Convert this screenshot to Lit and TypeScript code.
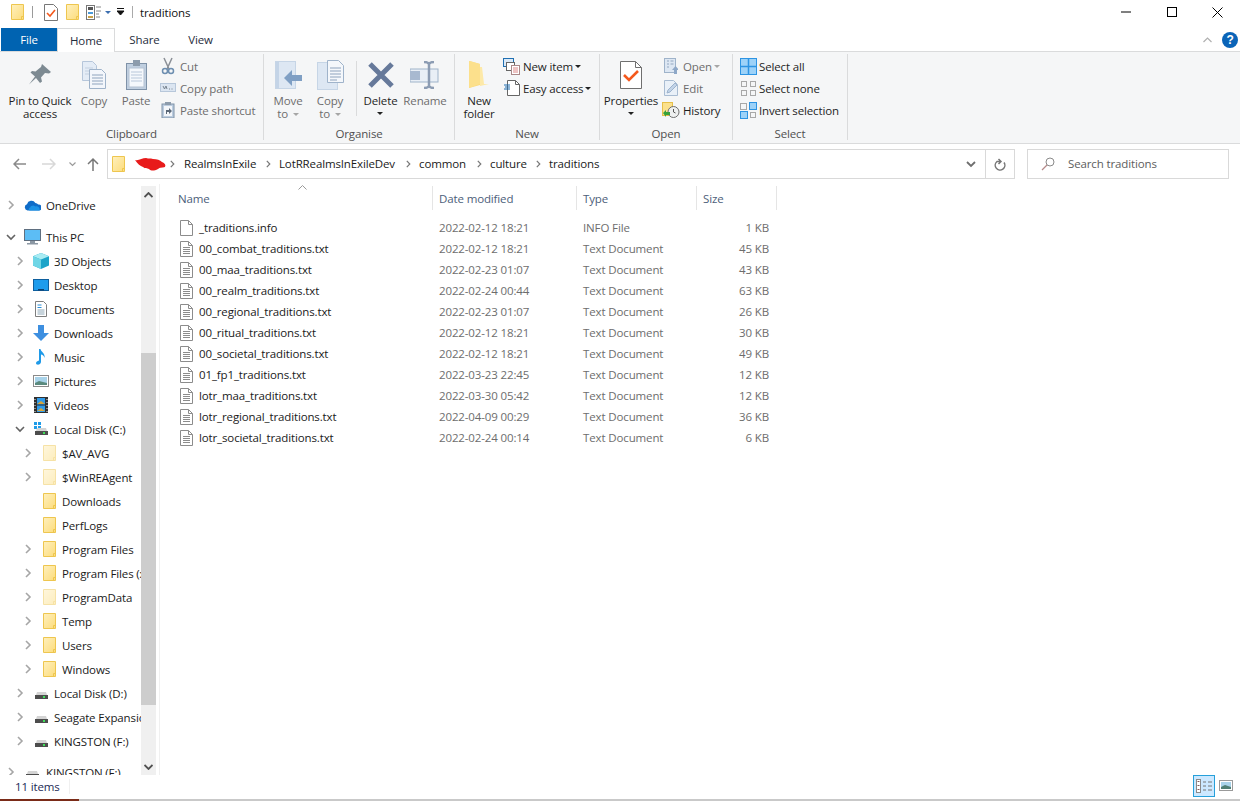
import { LitElement, html, css, svg } from "lit";
import { customElement } from "lit/decorators.js";

const folderSvg = (cls = "") => html`<svg class="${cls}" width="14" height="16" viewBox="0 0 14 16"><defs><linearGradient id="fg" x1="0" y1="0" x2="1" y2="1"><stop offset="0" stop-color="#fff0bd"/><stop offset="1" stop-color="#fcdc7c"/></linearGradient></defs><path d="M.5.5h12v15H.5z" fill="url(#fg)" stroke="#eec64f"/><path d="M10.5 15.5v-3h2" fill="none" stroke="#eec64f"/></svg>`;

const chevR = html`<svg width="7" height="10" viewBox="0 0 7 10"><path d="M1 1l4 4-4 4" fill="none" stroke="#a6a6a6" stroke-width="1.6"/></svg>`;
const chevD = html`<svg width="10" height="7" viewBox="0 0 10 7"><path d="M1 1l4 4 4-4" fill="none" stroke="#636363" stroke-width="1.6"/></svg>`;
const crumbChev = html`<svg width="5" height="8" viewBox="0 0 5 8"><path d="M.8.8l3 3.2-3 3.2" fill="none" stroke="#777" stroke-width="1.2"/></svg>`;

const wrap = (w: number, h: number, c: unknown) => html`<svg width="${w}" height="${h}" viewBox="0 0 ${w} ${h}">${c}</svg>`;

const hdd = (win = false) => wrap(16, 16, svg`
  ${win ? svg`<g fill="#1e9be8"><rect x="1" y="1" width="3" height="3"/><rect x="5" y="1" width="3" height="3"/><rect x="1" y="5" width="3" height="3"/><rect x="5" y="5" width="3" height="3"/></g>` : ""}
  <path d="M3 10l1-3h9l1 3z" fill="#d4d4d4"/><rect x="2" y="10" width="13" height="4" fill="#4d4d4d"/><rect x="10" y="11" width="2" height="2" fill="#3fe05a"/>`);

const navIcons: Record<string, unknown> = {
  onedrive: wrap(17, 12, svg`<path d="M3.5 11.5A3.2 3.2 0 0 1 3 5.3 4.6 4.6 0 0 1 11.4 4a3.7 3.7 0 0 1 2.8 1.5 3 3 0 0 1 .8 6z" fill="#0f6cc8"/><path d="M6 11.5c-1.6 0-1.8-2.4.2-3 .6-2 3.6-2.6 5-1 2-.6 5 .6 4.4 4z" fill="#1c93e6"/>`),
  pc: wrap(17, 16, svg`<rect x=".5" y=".5" width="16" height="11" fill="#5cbdf5" stroke="#5f6f80"/><path d="M6 12h5v2H6zM3 14h11v1.5H3z" fill="#8c98a4"/>`),
  cube: wrap(16, 16, svg`<path d="M8 0l8 3.2v9.4L8 16 0 12.6V3.2z" fill="#1ba4c9"/><path d="M8 0l8 3.2L8 6.6 0 3.2z" fill="#a9ecf3"/><path d="M0 3.2l8 3.4V16L0 12.6z" fill="#6fd6e6"/>`),
  desktop: wrap(16, 12, svg`<rect x=".5" y=".5" width="15" height="11" fill="#1e9cec" stroke="#0e5f9e"/><rect x="5" y="10" width="6" height="1.5" fill="#0e3f6e"/>`),
  docs: wrap(12, 16, svg`<path d="M.5.5h8l3 3v12H.5z" fill="#fff" stroke="#7e7e7e"/><path d="M2.5 4h4M2.5 6.5h4" stroke="#2a8fd8"/><path d="M2.5 9h7M2.5 11h7M2.5 13h7" stroke="#8fa8b8"/>`),
  dl: wrap(16, 16, svg`<path d="M5 0h6v8h5l-8 8-8-8h5z" fill="#3d8fe0"/>`),
  music: wrap(12, 16, svg`<path d="M4 0h1.5c.3 3 5 4 4 9-.5-2-2-3.400-3.500-3.500V13c0 2-2.500 3-4 2.500S.5 12.500 4 11.500z" fill="#1f9ae8"/>`),
  pics: wrap(16, 12, svg`<rect x=".5" y=".5" width="15" height="11" fill="#fff" stroke="#8a8a8a"/><rect x="2" y="2" width="12" height="8" fill="#a9d3ea"/><path d="M2 8l4-2 8 2v2H2z" fill="#5a8a7e"/>`),
  video: wrap(14, 16, svg`<rect width="14" height="16" fill="#2f2f2f"/><rect x="3" y="1" width="8" height="6.500" fill="#2f9ae8"/><rect x="3" y="8.500" width="8" height="6.500" fill="#2f9ae8"/><path d="M3 7l4-3 4 3zM3 14l4-3 4 3z" fill="#d7a43a"/><path d="M1 2v1M1 5v1M1 8v1M1 11v1M1 14v1M13 2v1M13 5v1M13 8v1M13 11v1M13 14v1" stroke="#eee"/>`),
  hddc: hdd(true),
  hdd: hdd(false),
};

interface NavRow { label: string; icon: string; level: number; arrow: "r" | "d" | ""; faded?: boolean; gap?: boolean; tight?: boolean }
const nav: NavRow[] = [
  { label: "OneDrive", icon: "onedrive", level: 0, arrow: "r" },
  { label: "This PC", icon: "pc", level: 0, arrow: "d", gap: true },
  { label: "3D Objects", icon: "cube", level: 1, arrow: "r" },
  { label: "Desktop", icon: "desktop", level: 1, arrow: "r" },
  { label: "Documents", icon: "docs", level: 1, arrow: "r" },
  { label: "Downloads", icon: "dl", level: 1, arrow: "r" },
  { label: "Music", icon: "music", level: 1, arrow: "r" },
  { label: "Pictures", icon: "pics", level: 1, arrow: "r" },
  { label: "Videos", icon: "video", level: 1, arrow: "r" },
  { label: "Local Disk (C:)", icon: "hddc", level: 1, arrow: "d" },
  { label: "$AV_AVG", icon: "folder", level: 2, arrow: "r", faded: true },
  { label: "$WinREAgent", icon: "folder", level: 2, arrow: "r", faded: true },
  { label: "Downloads", icon: "folder", level: 2, arrow: "" },
  { label: "PerfLogs", icon: "folder", level: 2, arrow: "" },
  { label: "Program Files", icon: "folder", level: 2, arrow: "r" },
  { label: "Program Files (x86)", icon: "folder", level: 2, arrow: "r" },
  { label: "ProgramData", icon: "folder", level: 2, arrow: "r", faded: true },
  { label: "Temp", icon: "folder", level: 2, arrow: "r" },
  { label: "Users", icon: "folder", level: 2, arrow: "r" },
  { label: "Windows", icon: "folder", level: 2, arrow: "r" },
  { label: "Local Disk (D:)", icon: "hdd", level: 1, arrow: "r" },
  { label: "Seagate Expansion Drive", icon: "hdd", level: 1, arrow: "r" },
  { label: "KINGSTON (F:)", icon: "hdd", level: 1, arrow: "r" },
  { label: "KINGSTON (F:)", icon: "hdd", level: 0, arrow: "r", tight: true },
];

const files = [
  ["_traditions.info", "2022-02-12 18:21", "INFO File", "1 KB"],
  ["00_combat_traditions.txt", "2022-02-12 18:21", "Text Document", "45 KB"],
  ["00_maa_traditions.txt", "2022-02-23 01:07", "Text Document", "43 KB"],
  ["00_realm_traditions.txt", "2022-02-24 00:44", "Text Document", "63 KB"],
  ["00_regional_traditions.txt", "2022-02-23 01:07", "Text Document", "26 KB"],
  ["00_ritual_traditions.txt", "2022-02-12 18:21", "Text Document", "30 KB"],
  ["00_societal_traditions.txt", "2022-02-12 18:21", "Text Document", "49 KB"],
  ["01_fp1_traditions.txt", "2022-03-23 22:45", "Text Document", "12 KB"],
  ["lotr_maa_traditions.txt", "2022-03-30 05:42", "Text Document", "12 KB"],
  ["lotr_regional_traditions.txt", "2022-04-09 00:29", "Text Document", "36 KB"],
  ["lotr_societal_traditions.txt", "2022-02-24 00:14", "Text Document", "6 KB"],
];

const fileIcon = (lines: boolean) => wrap(13, 16, svg`<path d="M.5.5h8l4 4v11H.5z" fill="#fff" stroke="#8c8c8c"/><path d="M8.500.5v4h4" fill="none" stroke="#8c8c8c"/>${lines ? svg`<path d="M3 6.500h7M3 8.500h7M3 10.500h7M3 12.500h7" stroke="#8c8c8c"/>` : ""}`);

const lg: Record<string, unknown> = {
  pin: wrap(22, 22, svg`<path d="M13 0l9 8-2 1.500-4-.5-4 4.500 1 4-2 1.500-4-5-7 6.500 6-8-4.500-4L3 7l3.500.5L12 3z" fill="#7d8a92"/>`),
  copy: wrap(25, 28, svg`<path d="M.5.5h10l4 4v15H.5z" fill="#e4ecf6" stroke="#b6c6da"/><path d="M3 7h8M3 10h8M3 13h8" stroke="#c3d0e0"/><path d="M7.500 8.500h12l4 4v15h-16z" fill="#f3f6fb" stroke="#9fb3ca"/><path d="M10 14h11M10 17h11M10 20h11M10 23h11" stroke="#8ea3bd"/>`),
  paste: wrap(21, 30, svg`<rect x=".5" y="3.500" width="20" height="26" fill="#c0cfe0" stroke="#7f92a8"/><rect x="3" y="8" width="15" height="19" fill="#f5f8fc" stroke="#b5c3d3"/><path d="M5 12h11M5 15h11M5 18h11M5 21h11" stroke="#b8c7da"/><rect x="7" y="0" width="7" height="6" fill="#8d9cac"/>`),
  move: wrap(27, 28, svg`<rect x=".5" y=".5" width="20" height="27" fill="#dde7f3" stroke="#c6d5e6"/><rect x="1" y="1" width="3" height="26" fill="#c4d4e7"/><path d="M9 17l8-8v5h10v6H17v5z" fill="#7f9fc4"/>`),
  copyto: wrap(27, 30, svg`<rect x=".5" y="2.500" width="20" height="27" fill="#dde7f3" stroke="#c6d5e6"/><path d="M10.500.5h11l5 5v17h-16z" fill="#f4f7fb" stroke="#9fb3ca"/><path d="M13 8h11M13 11h11M13 14h11M13 17h11M13 20h7" stroke="#8ea3bd"/>`),
  del: wrap(26, 26, svg`<path d="M2 2l22 22M24 2L2 24" stroke="#66799a" stroke-width="5"/>`),
  rename: wrap(30, 28, svg`<rect x="0" y="8" width="28" height="13" fill="#e9eff6" stroke="#9fb3ca"/><rect x="0" y="10" width="10" height="9" fill="#a8b9d0"/><path d="M14 1c2 0 4 0 5 2 1-2 3-2 5-2M19 3v22M14 27c2 0 4 0 5-2 1 2 3 2 5 2" fill="none" stroke="#8c9cb3" stroke-width="2.500"/>`),
  newf: wrap(20, 28, svg`<path d="M0 0l11 3v21L0 27z" fill="#fbd97a"/><path d="M11 6h2l2 17h5l-9 2z" fill="#fde9a8"/><path d="M0 0h1l10 3v20l-11 4z" fill="#fce08c"/>`),
  props: wrap(22, 28, svg`<path d="M.5.5h15l6 6v21H.5z" fill="#fff" stroke="#6f6f6f"/><path d="M15.500.5v6h6" fill="none" stroke="#6f6f6f"/><path d="M4 14l5 5 9-9" fill="none" stroke="#f4591d" stroke-width="2.600"/>`),
};

const sm: Record<string, unknown> = {
  cut: wrap(16, 18, svg`<path d="M4 1l5 11M12 1L7 12" stroke="#8a8f96" stroke-width="1.500"/><circle cx="5" cy="14" r="2.500" fill="none" stroke="#6d8eb0" stroke-width="1.500"/><circle cx="11" cy="14" r="2.500" fill="none" stroke="#6d8eb0" stroke-width="1.500"/>`),
  path: wrap(16, 10, svg`<rect x=".5" y=".5" width="15" height="8" fill="#dbe5f1" stroke="#b7c7da"/><path d="M3 3l1.500 3 1.500-3 1 3M9 6h1M11.500 6h1" stroke="#77838f" fill="none"/>`),
  shortcut: wrap(14, 16, svg`<rect x="1" y="2" width="12" height="14" fill="#bccde0" stroke="#7f92a8"/><rect x="3" y="4" width="8" height="10" fill="#f3f6fa"/><path d="M5 12V8h3V6l3 3-3 3v-2H6v2z" fill="#5a6878"/><rect x="4" y="0" width="6" height="3" fill="#8d9cac"/>`),
  newitem: wrap(17, 17, svg`<rect x=".5" y=".5" width="10" height="8" fill="#dbe9f7" stroke="#1f6fb2"/><rect x="3.500" y="4.500" width="8" height="8" fill="#fff" stroke="#666"/><rect x="8.500" y="7.500" width="8" height="9" fill="#fff" stroke="#a88"/><path d="M10 10h5M10 12h5M10 14h5" stroke="#d88"/>`),
  easy: wrap(16, 16, svg`<path d="M3.500.5h8l4 4v11h-12z" fill="#fff" stroke="#666"/><path d="M11.500.5v4h4" fill="none" stroke="#666"/><path d="M0 5h6M1 7h5M0 9h6" stroke="#1f6fb2"/>`),
  open: wrap(14, 16, svg`<rect x=".5" y=".5" width="11" height="14" fill="#dde7f3" stroke="#9fb3ca"/><path d="M3 3h2M6.500 3h3M3 6h2M6.500 6h3M3 9h2" stroke="#93a7c0"/><path d="M10 16v-4H8l3.500-4L15 12h-2v4z" fill="#8ea8c8"/>`),
  edit: wrap(14, 16, svg`<path d="M.5.5h9l4 4v11H.5z" fill="#e9f0f8" stroke="#a9bcd2"/><path d="M3 13l1-3 7-7 2 2-7 7z" fill="#c3d4e8" stroke="#9db3cd"/>`),
  history: wrap(18, 16, svg`<rect x=".5" y=".5" width="10" height="13" fill="#fbe08c" stroke="#e6bf49"/><circle cx="11.500" cy="10" r="5.500" fill="#eef0f0" stroke="#6e6e6e"/><path d="M11.500 7v3l2 1" stroke="#555" fill="none"/><path d="M1 11l3-3v2h4v3H4v2z" fill="#37a23a"/>`),
  all: wrap(17, 17, svg`<rect x=".5" y=".5" width="16" height="16" fill="#9dd2f8" stroke="#2d94e3"/><path d="M8.500 0v17M0 8.500h17" stroke="#2d94e3" stroke-width="1.500"/>`),
  none: wrap(15, 15, svg`<g fill="none" stroke="#a8a8a8"><rect x=".5" y=".5" width="5" height="5"/><rect x="9.500" y=".5" width="5" height="5"/><rect x=".5" y="9.500" width="5" height="5"/><rect x="9.500" y="9.500" width="5" height="5"/></g>`),
  invert: wrap(17, 17, svg`<rect x=".5" y="1.500" width="6" height="6" fill="none" stroke="#a8a8a8"/><rect x="9.500" y=".5" width="7" height="7" fill="#9dd2f8" stroke="#2d94e3"/><rect x=".5" y="9.500" width="7" height="7" fill="#9dd2f8" stroke="#2d94e3"/><rect x="10.500" y="10.500" width="5" height="5" fill="none" stroke="#a8a8a8"/>`),
};

const caret = (dis = false) => html`<span class="caret ${dis ? "dis" : ""}"></span>`;

const crumbs: [string, number][] = [
  ["RealmsInExile", 95],
  ["LotRRealmsInExileDev", 140],
  ["common", 71],
  ["culture", 59],
  ["traditions", 70],
];

@customElement("app-root")
export class AppRoot extends LitElement {
  static styles = css`
    :host { display: block; width: 1240px; height: 801px; overflow: hidden; background: #fff; font: 11.5px "Open Sans", "Noto Sans", sans-serif; letter-spacing: -.13px; color: #1a1a1a; }
    svg { display: block; flex: none; }
    .window { display: flex; flex-direction: column; height: 801px; }

    .titlebar { height: 28px; display: flex; align-items: center; flex: none; padding-bottom: 4px; box-sizing: border-box; }
    .qat { display: flex; align-items: center; padding-left: 11px; }
    .qat .sep { width: 1px; height: 12px; background: #9a9a9a; }
    .title { color: #111; }
    .winctl { margin-left: auto; display: flex; align-items: center; }
    .winbtn { width: 46px; display: flex; justify-content: center; }

    .tabs { height: 24px; display: flex; flex: none; position: relative; padding-left: 1px; border-bottom: 1px solid #dadbdc; box-sizing: border-box; }
    .tab { display: flex; align-items: center; justify-content: center; color: #1f2d3d; box-sizing: border-box; height: 24px; padding-bottom: 1px; }
    .tab.file { width: 56px; background: #0063b1; color: #fff; height: 23px; }
    .tab.home { width: 58px; background: #fff; border: 1px solid #dadbdc; border-bottom: none; }
    .tab.share { width: 59px; }
    .tab.view { width: 53px; }
    .tabs .right { margin-left: auto; display: flex; align-items: center; gap: 10px; padding-right: 2px; }
    .help { width: 16px; height: 16px; border-radius: 50%; background: #0a64b8; color: #fff; font: bold 12px "Liberation Sans", sans-serif; display: flex; align-items: center; justify-content: center; }

    .ribbon { height: 92px; flex: none; background: #f5f6f7; border-bottom: 1px solid #dadbdc; box-sizing: border-box; display: flex; padding-top: 2px; }
    .group { border-right: 1px solid #dadbdc; height: 86px; display: flex; flex-direction: column; box-sizing: border-box; }
    .g-body { flex: 1; display: flex; min-height: 0; }
    .g-label { height: 12px; line-height: 12px; text-align: center; color: #505050; }
    .big { display: flex; flex-direction: column; align-items: center; flex: none; color: #1e1e1e; line-height: 13px; text-align: center; }
    .big .ic { height: 36px; display: flex; align-items: center; justify-content: center; margin-top: 3px; }
    .big .tx { margin-top: 1px; white-space: nowrap; }
    .dis { color: #6d6d6d; }
    .caret { display: inline-block; width: 0; height: 0; border: 3px solid transparent; border-top: 3px solid #222; border-bottom: none; vertical-align: 2px; margin-left: 2px; }
    .caret.dis { border-top-color: #a6a6a6; }
    .caret.block { display: block; margin: 5px auto 0; }
    .smcol { display: flex; flex-direction: column; padding-top: 1px; flex: none; }
    .small { height: 22px; display: flex; align-items: center; white-space: nowrap; color: #1e1e1e; }
    .small.dis { color: #6d6d6d; }
    .small .si { display: flex; align-items: center; justify-content: center; flex: none; }
    .vsep { width: 1px; height: 55px; background: #dadbdc; margin: 7px 0 0 5px; flex: none; }

    .addr { height: 40px; flex: none; display: flex; align-items: center; position: relative; }
    .nav-btns { width: 107px; display: flex; align-items: center; flex: none; }
    .addrbox { width: 908px; height: 30px; border: 1px solid #d9d9d9; box-sizing: border-box; display: flex; align-items: center; flex: none; }
    .crumbs { display: flex; align-items: center; flex: 1; padding-left: 4px; }
    .crumb { display: flex; align-items: center; flex: none; color: #1a1a1a; }
    .crumb .cv { margin-right: 8px; }
    .crumb .t, .search .t { padding-bottom: 2px; }
    .crumb .t { flex: 1; }
    .addr-dd { width: 29px; display: flex; justify-content: center; flex: none; }
    .addr-rf { width: 29px; height: 28px; border-left: 1px solid #d9d9d9; display: flex; align-items: center; justify-content: center; box-sizing: border-box; flex: none; }
    .search { width: 202px; height: 30px; margin: 0 0 0 12px; border: 1px solid #d9d9d9; box-sizing: border-box; display: flex; align-items: center; padding-left: 13px; gap: 13px; color: #5d5d5d; flex: none; }

    .main { flex: 1; display: flex; min-height: 0; }
    .tree { width: 141px; flex: none; overflow: hidden; padding-top: 9px; box-sizing: border-box; }
    .row { height: 24px; display: flex; align-items: center; white-space: nowrap; }
    .row.gap { margin-top: 8px; }
    .row.tight { margin-top: 7px; }
    .row .ar { width: 16px; display: flex; justify-content: center; flex: none; margin-left: 3px; }
    .row .ni { width: 24px; display: flex; justify-content: center; flex: none; margin-left: 1px; margin-right: 2px; }
    .row .lb { color: #1a1a1a; }
    .l1 { padding-left: 9px; } .l2 { padding-left: 17px; }
    .l1 .ni { margin-right: 1px; }
    .l2 .ni { width: 22px; margin-left: 3px; margin-right: 1px; }
    .faded .ni svg { opacity: .5; }

    .sbar { width: 15px; flex: none; background: #f0f0f0; display: flex; flex-direction: column; margin-top: 2px; }
    .sb-b { height: 17px; flex: none; display: flex; align-items: center; justify-content: center; }
    .thumb { height: 352px; background: #cdcdcd; margin-top: 150px; margin-bottom: auto; flex: none; }
    .split { width: 1px; background: #f0f0f0; margin-left: 3px; flex: none; }

    .list { flex: 1; position: relative; padding-left: 12px; }
    .head { display: grid; grid-template-columns: 261px 144px 120px 80px; height: 24px; margin-top: 2px; }
    .head div { color: #4c607a; padding-left: 6px; display: flex; align-items: center; border-right: 1px solid #e5e5e5; box-sizing: border-box; }
    .sort { position: absolute; left: 138px; top: 1px; }
    .files { margin-top: 7px; }
    .frow { display: grid; grid-template-columns: 261px 144px 120px 80px; height: 21px; align-items: center; }
    .fname { display: flex; align-items: center; padding-left: 8px; gap: 6px; white-space: nowrap; color: #1a1a1a; }
    .fcell { padding-left: 6px; color: #6d6d6d; }
    .fsize { color: #6d6d6d; text-align: right; padding-right: 8px; }

    .status { height: 24px; flex: none; display: flex; align-items: center; position: relative; padding-bottom: 2px; box-sizing: border-box; }
    .count { margin-left: 15px; width: 54px; color: #1c2a55; border-right: 1px solid #f0f0f0; }
    .views { margin-left: auto; display: flex; align-items: center; padding: 0 7px 1px 0; gap: 4px; }
    .view-on { width: 22px; height: 22px; background: #cce8ff; border: 1px solid #26a0da; box-sizing: border-box; display: flex; align-items: center; justify-content: center; }
    .strip { height: 2px; flex: none; background: #c9c9c9; display: flex; }
    .strip div { width: 79px; background: #7a2b18; }
  `;

  big(icon: unknown, label: unknown, width: number, dis: boolean) {
    return html`<div class="big ${dis ? "dis" : ""}" style="width:${width}px"><div class="ic">${icon}</div><div class="tx">${label}</div></div>`;
  }
  small(icon: unknown, label: unknown, iw: number, gap: number, dis = false) {
    return html`<div class="small ${dis ? "dis" : ""}"><span class="si" style="width:${iw}px;margin-right:${gap}px">${icon}</span>${label}</div>`;
  }

  render() {
    return html`<div class="window">
      <div class="titlebar">
        <div class="qat">
          ${folderSvg()}
          <span class="sep" style="margin:0 11px 0 7px"></span>
          ${wrap(14, 17, svg`<path d="M.5.5h9l4 4v12H.5z" fill="#fff" stroke="#777"/><path d="M3 9l3 3 5-6" fill="none" stroke="#f4591d" stroke-width="1.600"/>`)}
          <span style="width:8px"></span>
          ${folderSvg()}
          <span style="width:6px"></span>
          ${wrap(16, 15, svg`<rect x=".5" y=".5" width="8" height="14" fill="#fff" stroke="#777"/><rect x="2" y="2" width="5" height="3" fill="#555"/><rect x="2" y="7" width="5" height="2" fill="#4a9ad8"/><rect x="2" y="11" width="5" height="2" fill="#c9a24a"/><path d="M10 2h5M10 6h5M10 9h3M10 12h4" stroke="#888"/>`)}
          <span class="caret" style="border-top-color:#3c6fb0;margin-left:3px"></span>
          <span style="width:6px"></span>
          ${wrap(8, 8, svg`<path d="M0 .5h7M0 3h7l-3.500 4z" stroke="#111" fill="#111" stroke-width="1"/>`)}
          <span class="sep" style="margin:0 7px 0 7px;background:#aaa"></span>
          <span class="title">traditions</span>
        </div>
        <div class="winctl">
          <div class="winbtn">${wrap(10, 2, svg`<path d="M0 1h10" stroke="#000"/>`)}</div>
          <div class="winbtn">${wrap(10, 10, svg`<rect x=".5" y=".5" width="9" height="9" fill="none" stroke="#000"/>`)}</div>
          <div class="winbtn" style="width:44px;padding-right:1px">${wrap(11, 11, svg`<path d="M.5.5l10 10M10.500.5l-10 10" stroke="#000"/>`)}</div>
        </div>
      </div>

      <div class="tabs">
        <div class="tab file">File</div>
        <div class="tab home">Home</div>
        <div class="tab share">Share</div>
        <div class="tab view">View</div>
        <div class="right">
          ${wrap(9, 6, svg`<path d="M.5 5L4.500 1l4 4" fill="none" stroke="#b0b0b0" stroke-width="1.200"/>`)}
          <div class="help">?</div>
        </div>
      </div>

      <div class="ribbon">
        <div class="group" style="width:264px">
          <div class="g-body">
            <div style="width:4px"></div>
            ${this.big(lg.pin, html`Pin to Quick<br />access`, 72, false)}
            ${this.big(lg.copy, "Copy", 36, true)}
            ${this.big(lg.paste, "Paste", 48, true)}
            <div class="smcol">
              ${this.small(sm.cut, "Cut", 16, 4, true)}
              ${this.small(sm.path, "Copy path", 16, 4, true)}
              ${this.small(sm.shortcut, "Paste shortcut", 16, 4, true)}
            </div>
          </div>
          <div class="g-label">Clipboard</div>
        </div>
        <div class="group" style="width:191px">
          <div class="g-body">
            <div style="width:3px"></div>
            ${this.big(lg.move, html`Move<br />to ${caret(true)}`, 42, true)}
            ${this.big(lg.copyto, html`Copy<br />to ${caret(true)}`, 42, true)}
            <div class="vsep"></div>
            ${this.big(lg.del, html`Delete<span class="caret block"></span>`, 47, false)}
            ${this.big(lg.rename, "Rename", 42, true)}
          </div>
          <div class="g-label">Organise</div>
        </div>
        <div class="group" style="width:145px">
          <div class="g-body">
            ${this.big(lg.newf, html`New<br />folder`, 48, false)}
            <div class="smcol">
              ${this.small(sm.newitem, html`New item ${caret()}`, 17, 3)}
              ${this.small(sm.easy, html`Easy access ${caret()}`, 17, 3)}
            </div>
          </div>
          <div class="g-label">New</div>
        </div>
        <div class="group" style="width:133px">
          <div class="g-body">
            ${this.big(lg.props, html`Properties<span class="caret block"></span>`, 62, false)}
            <div class="smcol">
              ${this.small(sm.open, html`Open ${caret(true)}`, 18, 3, true)}
              ${this.small(sm.edit, "Edit", 18, 3, true)}
              ${this.small(sm.history, "History", 18, 3)}
            </div>
          </div>
          <div class="g-label">Open</div>
        </div>
        <div class="group" style="width:115px">
          <div class="g-body">
            <div style="width:7px"></div>
            <div class="smcol">
              ${this.small(sm.all, "Select all", 17, 2)}
              ${this.small(sm.none, "Select none", 17, 2)}
              ${this.small(sm.invert, "Invert selection", 17, 2)}
            </div>
          </div>
          <div class="g-label">Select</div>
        </div>
      </div>

      <div class="addr">
        <div class="nav-btns">
          <span style="width:13px"></span>
          ${wrap(14, 12, svg`<path d="M1 6h12M6 1L1 6l5 5" fill="none" stroke="#8a8a8a" stroke-width="1.500"/>`)}
          <span style="width:15px"></span>
          ${wrap(14, 12, svg`<path d="M0 6h12M8 1l5 5-5 5" fill="none" stroke="#d8d8d8" stroke-width="1.500"/>`)}
          <span style="width:13px"></span>
          ${wrap(7, 5, svg`<path d="M.5.5l3 3 3-3" fill="none" stroke="#9a9a9a" stroke-width="1.200"/>`)}
          <span style="width:11px"></span>
          ${wrap(12, 14, svg`<path d="M6 14V2M1 7l5-5 5 5" fill="none" stroke="#777" stroke-width="1.500"/>`)}
        </div>
        <div class="addrbox">
          <div class="crumbs">
            ${folderSvg()}
            <span style="width:8px"></span>
            ${wrap(32, 15, svg`<path d="M1 3c4 1 7-2 11-2 3 1 4 0 7 1 4 0 7 1 9 3 3 1 4 3 3 5-3 1-5 0-7 2-4 2-7 2-9 0-2-1-4 0-6-2-3-1-5-3-8-7z" fill="#e81b1b"/>`)}
            <span style="width:4px"></span>
            <span class="cv" style="margin-right:9px">${crumbChev}</span>
            ${crumbs.map(([t, w], i) => html`<div class="crumb" style="width:${w}px"><span class="t">${t}</span>${i < crumbs.length - 1 ? html`<span class="cv">${crumbChev}</span>` : ""}</div>`)}
          </div>
          <div class="addr-dd">${wrap(10, 7, svg`<path d="M1 1l4 4 4-4" fill="none" stroke="#6e6e6e" stroke-width="1.800"/>`)}</div>
          <div class="addr-rf">${wrap(12, 13, svg`<path d="M10 4.500A4.800 4.800 0 1 1 3 3.500H7M4.500 1L7 3.500 4.500 6" fill="none" stroke="#777" stroke-width="1.500"/>`)}</div>
        </div>
        <div class="search">
          ${wrap(14, 14, svg`<circle cx="9" cy="5" r="4" fill="none" stroke="#8a8a8a"/><path d="M6 8l-5 5" stroke="#b58a8a" stroke-width="1.300"/>`)}
          <span class="t">Search traditions</span>
        </div>
      </div>

      <div class="main">
        <div class="tree">
          ${nav.map((r) => html`<div class="row l${r.level} ${r.gap ? "gap" : ""} ${r.tight ? "tight" : ""} ${r.faded ? "faded" : ""}">
            <span class="ar">${r.arrow === "r" ? chevR : r.arrow === "d" ? chevD : ""}</span>
            <span class="ni">${r.icon === "folder" ? folderSvg() : navIcons[r.icon]}</span>
            <span class="lb">${r.label}</span>
          </div>`)}
        </div>
        <div class="sbar">
          <div class="sb-b">${wrap(9, 6, svg`<path d="M.5 5l4-4 4 4" fill="none" stroke="#505050" stroke-width="1.800"/>`)}</div>
          <div class="thumb"></div>
          <div class="sb-b">${wrap(9, 6, svg`<path d="M.5 1l4 4 4-4" fill="none" stroke="#505050" stroke-width="1.800"/>`)}</div>
        </div>
        <div class="split"></div>
        <div class="list">
          <span class="sort">${wrap(9, 5, svg`<path d="M.5 4.500l4-4 4 4" fill="none" stroke="#9a9a9a"/>`)}</span>
          <div class="head">
            <div>Name</div><div>Date modified</div><div>Type</div><div>Size</div>
          </div>
          <div class="files">
            ${files.map((f, i) => html`<div class="frow">
              <div class="fname">${fileIcon(i > 0)}<span>${f[0]}</span></div>
              <div class="fcell">${f[1]}</div>
              <div class="fcell">${f[2]}</div>
              <div class="fsize">${f[3]}</div>
            </div>`)}
          </div>
        </div>
      </div>

      <div class="status">
        <div class="count">11 items</div>
        <div class="views">
          <div class="view-on">${wrap(16, 14, svg`<rect x=".5" y=".5" width="4" height="13" fill="#fff" stroke="#8a8a8a"/><path d="M1.500 2.500h2M1.500 6.500h2M1.500 10.500h2" stroke="#8a5a5a"/><path d="M7 3h3M12 3h4M7 7h3M12 7h4M7 11h3M12 11h4" stroke="#777"/>`)}</div>
          ${wrap(14, 11, svg`<rect x=".5" y=".5" width="13" height="10" fill="#fff" stroke="#9a9a9a"/><rect x="2" y="2" width="10" height="7" fill="#a9d3ea"/><path d="M2 7l4-2 6 2v2H2z" fill="#4f7f74"/>`)}
        </div>
      </div>
      <div class="strip"><div></div></div>
    </div>`;
  }
}
